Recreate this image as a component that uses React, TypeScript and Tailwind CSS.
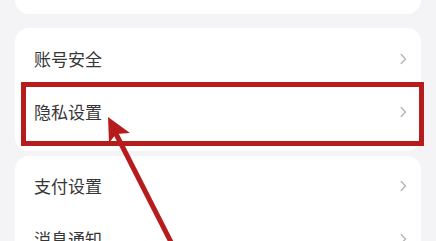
import React from 'react';

const Chevron = () => (
  <svg width="7" height="12" viewBox="0 0 7 12" fill="none">
    <path d="M1.2 1.5 L5.5 6 L1.2 10.5" stroke="#b8b8b8" strokeWidth="1.5" strokeLinecap="round" strokeLinejoin="round" />
  </svg>
);

const Row = ({ label }: { label: string }) => (
  <div className="h-[53px] flex items-center justify-between pl-[19px] pr-[14px]">
    <span className="text-[17px] text-[#363636] leading-none">{label}</span>
    <Chevron />
  </div>
);

export default function App() {
  return (
    <div
      className="relative w-[436px] h-[241px] overflow-hidden bg-[#f4f4f6] px-[15px]"
      style={{ fontFamily: '"Noto Sans CJK SC", "Noto Sans", sans-serif' }}
    >
      <div className="h-[14px] bg-white rounded-b-[14px]" />

      <div className="mt-[14px] bg-white rounded-[14px] pt-[4px] pb-[13px]">
        <Row label="账号安全" />
        <Row label="隐私设置" />
      </div>

      <div className="mt-[5px] bg-white rounded-[14px] pt-[3px]">
        <Row label="支付设置" />
        <Row label="消息通知" />
      </div>

      {/* annotation box */}
      <div className="absolute left-[21px] top-[82px] w-[403px] h-[64px] border-[5px] border-[#b71c1c]" />

      {/* annotation arrow */}
      <svg className="absolute left-0 top-0" width="436" height="241" viewBox="0 0 436 241">
        <line x1="175" y1="250" x2="114" y2="130" stroke="#b71c1c" strokeWidth="5" />
        <polygon points="108,117 109,143 116,134 130,133" fill="#b71c1c" />
      </svg>
    </div>
  );
}
